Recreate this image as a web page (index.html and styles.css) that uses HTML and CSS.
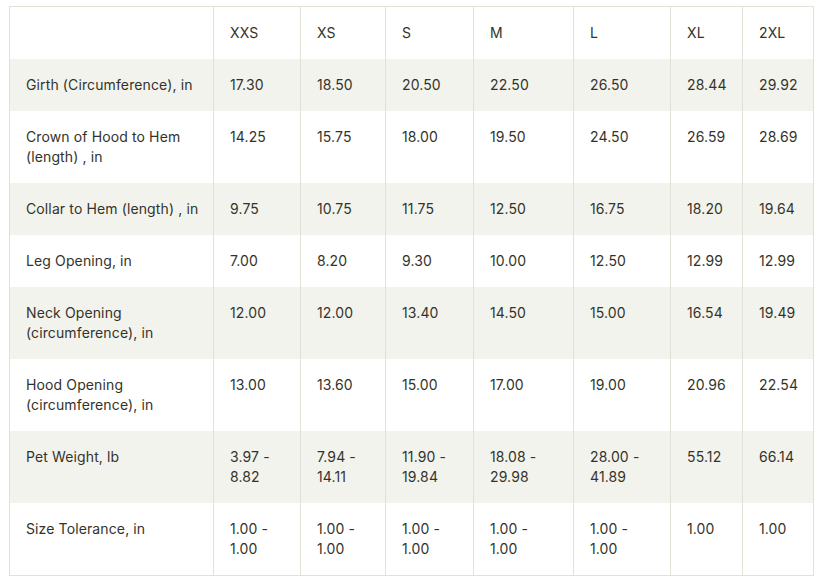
FILE: index.html
```html
<!DOCTYPE html>
<html>
<head>
<meta charset="utf-8">
<link rel="stylesheet" href="styles.css">
</head>
<body>
<table class="size-table">
  <colgroup>
    <col class="c-label">
    <col class="c-xxs">
    <col class="c-xs">
    <col class="c-s">
    <col class="c-m">
    <col class="c-l">
    <col class="c-xl">
    <col class="c-2xl">
  </colgroup>
  <thead>
    <tr><th></th><th>XXS</th><th>XS</th><th>S</th><th>M</th><th>L</th><th>XL</th><th>2XL</th></tr>
  </thead>
  <tbody>
    <tr class="shade"><td>Girth (Circumference), in</td><td>17.30</td><td>18.50</td><td>20.50</td><td>22.50</td><td>26.50</td><td>28.44</td><td>29.92</td></tr>
    <tr><td>Crown of Hood to Hem<br>(length) , in</td><td>14.25</td><td>15.75</td><td>18.00</td><td>19.50</td><td>24.50</td><td>26.59</td><td>28.69</td></tr>
    <tr class="shade"><td>Collar to Hem (length) , in</td><td>9.75</td><td>10.75</td><td>11.75</td><td>12.50</td><td>16.75</td><td>18.20</td><td>19.64</td></tr>
    <tr><td>Leg Opening, in</td><td>7.00</td><td>8.20</td><td>9.30</td><td>10.00</td><td>12.50</td><td>12.99</td><td>12.99</td></tr>
    <tr class="shade"><td>Neck Opening<br>(circumference), in</td><td>12.00</td><td>12.00</td><td>13.40</td><td>14.50</td><td>15.00</td><td>16.54</td><td>19.49</td></tr>
    <tr><td>Hood Opening<br>(circumference), in</td><td>13.00</td><td>13.60</td><td>15.00</td><td>17.00</td><td>19.00</td><td>20.96</td><td>22.54</td></tr>
    <tr class="shade"><td>Pet Weight, lb</td><td>3.97 -<br>8.82</td><td>7.94 -<br>14.11</td><td>11.90 -<br>19.84</td><td>18.08 -<br>29.98</td><td>28.00 -<br>41.89</td><td>55.12</td><td>66.14</td></tr>
    <tr><td>Size Tolerance, in</td><td>1.00 -<br>1.00</td><td>1.00 -<br>1.00</td><td>1.00 -<br>1.00</td><td>1.00 -<br>1.00</td><td>1.00 -<br>1.00</td><td>1.00</td><td>1.00</td></tr>
  </tbody>
</table>
</body>
</html>
```
FILE: styles.css
```css
html, body {
  margin: 0;
  padding: 0;
  background: #ffffff;
}
body {
  padding: 6px 9px;
  font-family: Inter, "Liberation Sans", sans-serif;
  font-size: 14px;
  letter-spacing: 0.12px;
  color: #33332a;
}
.size-table {
  border-collapse: collapse;
  table-layout: fixed;
  width: 805px;
  border: 1px solid #e2e1d7;
}
.c-label { width: 204px; }
.c-xxs { width: 87px; }
.c-xs { width: 85px; }
.c-s { width: 88px; }
.c-m { width: 100px; }
.c-l { width: 97px; }
.c-xl { width: 72px; }
.c-2xl { width: 71px; }
.size-table th,
.size-table td {
  border-left: 1px solid #e2e1d7;
  border-right: 1px solid #e2e1d7;
  padding: 16px 14px 16px 16px;
  line-height: 20px;
  text-align: left;
  vertical-align: top;
  font-weight: 400;
}
.shade {
  background: #f3f3ee;
}
```
